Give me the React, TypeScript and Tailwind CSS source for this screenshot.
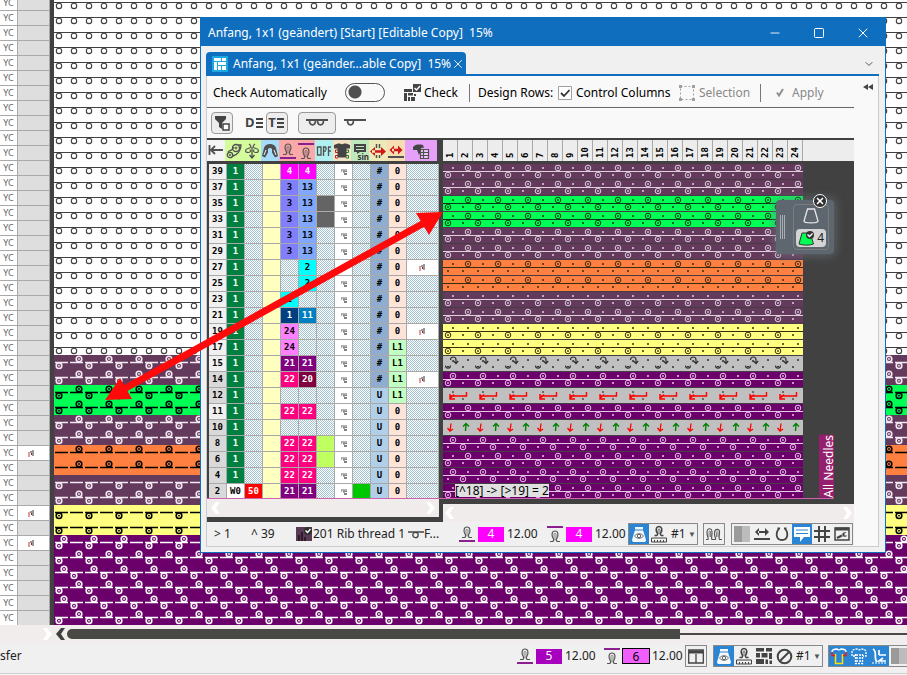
import type { ReactNode } from "react";
import { ChevronDown, Minus, Square, X } from "lucide-react";

const MAUVE = "#633a5b";
const GREEN = "#00ff55";
const ORANGE = "#ff8040";
const YELLOW = "#ffff80";
const PURPLE = "#6b006b";
const GRAY = "#c0c0c0";

interface Course { bg: string; fg: string; up?: number; down?: number; note?: boolean; }

const mauve = { bg: MAUVE, fg: "#f4e8f2" };
const purple = { bg: PURPLE, fg: "#ffffff" };

// Coloured courses of the fabric below the blank ones
const courses: Course[] = [
  { ...mauve, up: 25, down: 5 },
  { ...mauve, up: 25, down: 5 },
  { bg: GREEN, fg: "#000000", up: 25, down: 5 },
  { bg: GREEN, fg: "#000000", up: 25, down: 5 },
  { ...mauve, up: 25, down: 5 },
  { ...mauve, up: 25, down: 5 },
  { bg: ORANGE, fg: "#000000", up: 25, note: true },
  { bg: ORANGE, fg: "#000000", up: 25 },
  { ...mauve, down: 5 },
  { ...mauve, up: 25, down: 5 },
  { bg: YELLOW, fg: "#000000", down: 5, note: true },
  { bg: YELLOW, fg: "#000000", down: 5 },
  { ...purple, up: 10, down: 5, note: true },
  { ...purple, up: 25, down: 5 },
  { ...purple, up: 10, down: 20 },
  { ...purple, up: 25, down: 5 },
  { ...purple, up: 10, down: 20 },
  { ...purple, up: 25, down: 5 },
];
const fabric: (Course | null)[] = [...Array(24).fill(null), ...courses];

type RowKind = "knit" | "transfer" | "rack" | "split";

interface Row { no: number; front?: string; frontBg?: string; back?: string; backBg?: string; size?: string; note?: boolean; mode: string; rack: string; bg: string; fg: string; kind: RowKind; up?: number; down?: number; }

const lightLine = "#e0cfdd";
const darkLine = "#3a2a10";
const M = { bg: MAUVE, fg: lightLine, kind: "knit" as RowKind };
const P = { bg: PURPLE, fg: "#e8c4e8", kind: "knit" as RowKind };
const G = { bg: GREEN, fg: "#063a14", kind: "knit" as RowKind };
const O = { bg: ORANGE, fg: darkLine, kind: "knit" as RowKind };
const Y = { bg: YELLOW, fg: darkLine, kind: "knit" as RowKind };
const blues = { front: "3", frontBg: "bg-[#8080ff]", back: "13", backBg: "bg-[#80a8ff]" };
const pinks = { front: "22", frontBg: "bg-[#ff0080] text-white", back: "22", backBg: "bg-[#ff0080] text-white" };
const violets = { front: "21", frontBg: "bg-[#800080] text-white", back: "21", backBg: "bg-[#800080] text-white" };

const rows: Row[] = [
  { no: 39, ...M, front: "4", frontBg: "bg-[#ff00ff] text-white", back: "4", backBg: "bg-[#ff00ff] text-white", mode: "#", rack: "0", up: 25, down: 5 },
  { no: 37, ...M, ...blues, mode: "#", rack: "0", up: 25, down: 5 },
  { no: 35, ...G, ...blues, size: "bg-[#646464]", mode: "#", rack: "0", up: 25, down: 5 },
  { no: 33, ...G, ...blues, size: "bg-[#646464]", mode: "#", rack: "0", up: 25, down: 5 },
  { no: 31, ...M, ...blues, mode: "#", rack: "0", up: 25, down: 5 },
  { no: 29, ...M, ...blues, mode: "#", rack: "0", up: 25, down: 5 },
  { no: 27, ...O, back: "2", backBg: "bg-[#00ffff]", note: true, mode: "#", rack: "0", up: 25 },
  { no: 25, ...O, back: "2", backBg: "bg-[#00ffff]", mode: "#", rack: "0", up: 25 },
  { no: 23, ...M, front: "2", frontBg: "bg-[#00ffff]", mode: "#", rack: "0", down: 5 },
  { no: 21, ...M, front: "1", frontBg: "bg-[#004080] text-white", back: "11", backBg: "bg-[#0080c0] text-white", mode: "#", rack: "0", up: 25, down: 5 },
  { no: 19, ...Y, front: "24", frontBg: "bg-[#ff80ff]", note: true, mode: "#", rack: "0", down: 5 },
  { no: 17, ...Y, front: "24", frontBg: "bg-[#ff80ff]", mode: "#", rack: "L1", down: 5 },
  { no: 15, bg: GRAY, fg: "#303030", kind: "transfer", ...violets, mode: "#", rack: "L1" },
  { no: 14, ...P, front: "22", frontBg: "bg-[#ff0080] text-white", back: "20", backBg: "bg-[#800040] text-white", note: true, mode: "#", rack: "L1", up: 10, down: 5 },
  { no: 12, bg: GRAY, fg: "#505050", kind: "rack", mode: "U", rack: "L1" },
  { no: 11, ...P, ...pinks, mode: "U", rack: "0", up: 25, down: 5 },
  { no: 10, bg: GRAY, fg: "#505050", kind: "split", mode: "U", rack: "0" },
  { no: 8, ...P, ...pinks, size: "bg-[#c0ff60]", mode: "U", rack: "0", up: 10, down: 20 },
  { no: 6, ...P, ...pinks, size: "bg-[#c0ff60]", mode: "U", rack: "0", up: 25, down: 5 },
  { no: 4, ...P, ...pinks, mode: "U", rack: "0", up: 10, down: 20 },
  { no: 2, ...P, ...violets, mode: "U", rack: "0", up: 25, down: 5 },
];

const HATCH = "bg-[conic-gradient(#a3c3d3_25%,#ffffff_0_50%,#a3c3d3_0_75%,#ffffff_0)] bg-[length:2px_2px]";

function Loop({ x, y, fg, bg }: { x: number; y: number; fg: string; bg: string }) {
  return (
    <>
      <circle cx={x} cy={y} r="2.8" fill={bg} stroke={fg} strokeWidth="1.6" />
      <circle cx={x} cy={y} r="0.9" fill={fg} />
    </>
  );
}

function FabricRow({ course, id }: { course: Course | null; id: string }) {
  return (
    <svg className="block h-[15px] w-full shrink-0">
      <defs>
        <pattern id={id} width={course ? 30 : 15} height="15" patternUnits="userSpaceOnUse">
          {course ? (
            <>
              <rect width="30" height="15" fill={course.bg} />
              <path d="M1 7.5h13M16 7.5h13" stroke={course.fg} strokeWidth="1.4" />
              {course.up && <Loop x={course.up} y={4} fg={course.fg} bg={course.bg} />}
              {course.down && <Loop x={course.down} y={10.7} fg={course.fg} bg={course.bg} />}
            </>
          ) : (
            <>
              <rect width="15" height="15" fill="#ffffff" />
              <path d="M0 7.5h15" stroke="#404040" />
              <circle cx="5" cy="10.9" r="2.7" fill="none" stroke="#404040" strokeWidth="1.1" />
            </>
          )}
        </pattern>
      </defs>
      <rect width="100%" height="15" fill={`url(#${id})`} />
    </svg>
  );
}

function NeedleDot({ x, y, fg }: { x: number; y: number; fg: string }) {
  return <rect x={x - 1} y={y - 1} width="2" height="2" fill={fg} opacity="0.75" />;
}

function Ring({ x, y, fg }: { x: number; y: number; fg: string }) {
  return (
    <>
      <circle cx={x} cy={y} r="2.8" fill="none" stroke={fg} />
      <rect x={x - 0.8} y={y - 0.8} width="1.6" height="1.6" fill={fg} />
    </>
  );
}

function TechRow({ row }: { row: Row }) {
  const id = `tech-${row.no}`;
  return (
    <svg className="block h-4 w-full shrink-0">
      <defs>
        <pattern id={id} width="30" height="16" patternUnits="userSpaceOnUse">
          <rect width="30" height="16" fill="#463c46" />
          <rect y="1" width="30" height="15" fill={row.bg} />
          {row.kind === "knit" && (
            <>
              <path d="M0 8.5h30" stroke={row.fg} />
              {[10, 25].map((x) => (row.up === x ? <Ring key={x} x={x} y={5} fg={row.fg} /> : <NeedleDot key={x} x={x} y={5} fg={row.fg} />))}
              {[5, 20].map((x) => (row.down === x ? <Ring key={x} x={x} y={12} fg={row.fg} /> : <NeedleDot key={x} x={x} y={12} fg={row.fg} />))}
            </>
          )}
          {row.kind === "transfer" && (
            <>
              <path d="M7.5 5c0-4 5.500-4 5.500 0v3M10.500 6l2.500 2.700 2.200-2.700" fill="none" stroke={row.fg} strokeWidth="1.2" />
              <path d="M2.500 10.500c0 3.500 5 3.500 5 0M4 11.500h2" fill="none" stroke={row.fg} strokeWidth="1.1" />
              <NeedleDot x={10} y={6} fg={row.fg} />
              <NeedleDot x={25} y={5} fg={row.fg} />
              <NeedleDot x={20} y={12} fg={row.fg} />
            </>
          )}
          {row.kind === "rack" && (
            <>
              <path d="M23.500 5v4H7M11 7.500L7 11.500M7 7v5h5" fill="none" stroke="#ff0000" strokeWidth="1.400" />
              <NeedleDot x={10} y={5} fg={row.fg} />
              <NeedleDot x={20} y={12} fg={row.fg} />
            </>
          )}
          {row.kind === "split" && (
            <>
              <path d="M8 4.500L7 12M4.500 9l2.500 3.200L10 10" fill="none" stroke="#ff0000" strokeWidth="1.300" />
              <path d="M22.500 12l.500-7M20 7.500L23 4.500 26 7.500" fill="none" stroke="#008000" strokeWidth="1.400" />
            </>
          )}
        </pattern>
      </defs>
      <rect width="100%" height="16" fill={`url(#${id})`} />
    </svg>
  );
}

function NoteMark() {
  return (
    <svg width="7" height="7" viewBox="0 0 7 7" className="mx-auto block">
      <path d="M0 2h2v5H0z" fill="#e09a9a" />
      <path d="M2 1h2v2H2zM4 0h2v6H4z" fill="#999999" />
      <path d="M3 3h1v2H3z" fill="#803030" />
    </svg>
  );
}

function CellMark() {
  return (
    <svg width="6" height="6" viewBox="0 0 6 6" className="mx-auto block">
      <path d="M0 0h6v2H0zM2 2h2v2H2z" fill="#b0b0b0" />
      <path d="M2 2h4v1H2zM3 4h3v2H3z" fill="#808080" />
      <path d="M0 2h1v1H0z" fill="#d09090" />
    </svg>
  );
}

// Needle loop with the bed drawn under it (front) or over it (rear)
function BedLoop({ rear = false }: { rear?: boolean }) {
  return (
    <svg width="18" height="18" viewBox="0 0 18 18" className="shrink-0">
      <g transform={rear ? "translate(0 4)" : "translate(0 0)"} fill="none" stroke="#555555" strokeWidth="1.2">
        <path d="M4 12.500h2.500c1.500-.500 1.500-2 .500-3.500-1.500-2.500-1.500-7 2-7s3.500 4.500 2 7c-1 1.500-1 3 .500 3.500H14" />
        <path d="M8 11V5.500c0-1.500 2-1.500 2 0V11" strokeWidth="0.700" />
      </g>
      <path d={rear ? "M1 2h16" : "M1 16h16"} stroke="#8a2090" strokeWidth="2" />
    </svg>
  );
}

function LoopRuler() {
  return (
    <svg width="18" height="18" viewBox="0 0 18 18" fill="none" stroke="#444444" className="shrink-0">
      <path d="M4.500 10.500h2c1.500-.500 1.200-2 .500-3-1.500-2.500-1-6 2-6s3.500 3.500 2 6c-.700 1-1 2.500.500 3h2" strokeWidth="1.500" />
      <path d="M8 9V5c0-1.300 2-1.300 2 0v4" strokeWidth="0.800" />
      <path d="M1.500 13h15v4h-15zM4.500 15v2M7.500 15v2M10.500 15v2M13.500 15v2" />
    </svg>
  );
}

function ConeEye() {
  return (
    <svg width="18" height="18" viewBox="0 0 18 18" fill="none" className="shrink-0">
      <path d="M5 2h8v3l3 10c0 1.500-1 2-2 2H4c-1 0-2-.500-2-2L5 5z" fill="#f4f8fc" />
      <path d="M4 5h10" stroke="#2a86d4" />
      <path d="M4.500 11c2.500-3 6.500-3 9 0-2.500 3-6.500 3-9 0z" stroke="#555555" strokeWidth="0.900" />
      <circle cx="9" cy="11" r="1.700" stroke="#555555" strokeWidth="0.900" />
    </svg>
  );
}

function Modules({ checked = false }: { checked?: boolean }) {
  return (
    <svg width="18" height="18" viewBox="0 0 18 18" className="shrink-0" fill="#444444">
      <path d={checked ? "M1 5h8v3H1zM1 9h3v8H1zM5 9h5v2.500H5zM5 13h2v4H5zM8 13h4v4H8zM11 10h2v2h-2z" : "M1 1h8v3.500H1zM11 1h6v3.500h-6zM1 6h4v4.500H1zM6.500 6h6v4.500h-6zM14 6h3v6h-3zM1 12h8v5H1zM10.500 12.500h2.500v4.500h-2.500zM14.500 13.500H17V17h-2.500z"} />
      {checked && (
        <>
          <path d="M10 0h8v8h-8z" />
          <path d="M11.500 4l2 2 3.500-4" fill="none" stroke="#ffffff" strokeWidth="1.400" />
        </>
      )}
    </svg>
  );
}

function YarnLine({ loops = 2 }: { loops?: number }) {
  return (
    <svg width={loops === 2 ? 24 : 22} height="12" viewBox={loops === 2 ? "0 0 24 12" : "0 0 22 12"} fill="none" stroke="#505050" className="shrink-0">
      <path d={loops === 2 ? "M1 3h22" : "M0 3h22"} strokeWidth="2" />
      <path d={loops === 2 ? "M4.500 3c0 6.500 6 6.500 6 0M12.500 3c0 6.500 6 6.500 6 0" : "M3.500 3c0 6.500 6 6.500 6 0"} strokeWidth="1.700" />
    </svg>
  );
}

function HeadIcon({ children }: { children: ReactNode }) {
  return <svg width="18" height="20" viewBox="0 0 18 20" fill="none" stroke="#505050">{children}</svg>;
}

function ColumnHeads() {
  return (
    <div className="flex h-[21px] border-r-[6px] border-[#414141]">
      <span className="w-[18px] bg-[#f4f4f4]"><HeadIcon><path d="M2.500 5v10M4 10h12M8 6l-4 4 4 4" strokeWidth="1.800" /></HeadIcon></span>
      <span className="w-[18px] bg-[#d4fb9c]">
        <HeadIcon>
          <circle cx="11" cy="8" r="3.500" strokeWidth="1.300" />
          <circle cx="11" cy="8" r="1" />
          <circle cx="5" cy="15" r="2.700" strokeWidth="1.300" />
          <circle cx="5" cy="15" r=".7" />
          <path d="M3 12c2-2 4-1 6-5M8 16c4-1 8-5 8-11h-3" strokeWidth="1.300" />
        </HeadIcon>
      </span>
      <span className="w-[18px] bg-[#d4fb9c]">
        <HeadIcon>
          <path d="M9 7v11M6.500 15l2.500 3 2.500-3" strokeWidth="1.300" />
          <path d="M6 4c3 2 2 4-1 4.500-3 .500-3.500 4 0 4 2 0 3-1 2-3M12 4c-3 2-2 4 1 4.500 3 .500 3.500 4 0 4-2 0-3-1-2-3" strokeWidth="1.200" />
        </HeadIcon>
      </span>
      <span className="w-[18px] bg-[#a4dcfa]">
        <HeadIcon>
          <path d="M1 16l2-8c1-3 3-4 6-4s5 1 6 4l2 8-3 1.500-3-5V9c-1-1.500-3-1.500-4 0v3.500l-3 5z" fill="#505050" stroke="none" />
          <path d="M3 15l2-5M15 15l-2-5" stroke="#e8f6fd" />
        </HeadIcon>
      </span>
      <span className="flex w-[18px] items-center bg-[#fba8a8]"><BedLoop /></span>
      <span className="flex w-[18px] items-center bg-[#fba8a8]"><BedLoop rear /></span>
      <span className="w-[18px] bg-[#b0f0f0]">
        <HeadIcon><path d="M2.500 7h3.500v8H2.500zM8.500 16V7H11M8.500 11H11M13 7h3M13.500 16V7M13.500 11h2.500M11 7v3" strokeWidth="1.300" /></HeadIcon>
      </span>
      <span className="w-[18px] bg-[#f4e2c4]">
        <HeadIcon>
          <path d="M5 10H2.500v2.500H5M5 15.500H2.500V18H5" stroke="#c02020" />
          <path d="M13 10h2.500v2.500H13M13 15.500h2.500V18H13" stroke="#208020" />
          <path d="M5 3.500h2c1 1 3 1 4 0h2l4 1.500v3.500h-3.500v9h-9v-9H1V5z" fill="#444444" stroke="none" />
        </HeadIcon>
      </span>
      <span className="relative w-[18px] bg-[#bfe8bf]">
        <HeadIcon><path d="M3 4h12v8H9l-3 2v-2H3z" fill="#444444" stroke="none" /><path d="M5 6.500h8M5 9.500h8" stroke="#bfe8bf" /></HeadIcon>
        <b className="absolute bottom-0 right-0 text-[8px] leading-[8px] text-[#333333]">sin</b>
      </span>
      <span className="w-[18px] bg-[#ecebb8]">
        <HeadIcon><path d="M7.500 4v4M10.500 4v4M7.500 15v3M10.500 15v3" strokeWidth="1.500" /><path d="M6 7l-5 4.500L6 16zM12 7l5 4.500-5 4.500zM3 10.200h12v2.600H3z" fill="#d01818" stroke="none" /></HeadIcon>
      </span>
      <span className="w-[18px] bg-[#f6deb2]">
        <HeadIcon><path d="M7 5.500l-4.500 4.500L7 14.500zM11 5.500l4.500 4.500-4.500 4.500zM5 8.800h8v2.400H5z" fill="#d01818" stroke="none" /><path d="M1 17h16" strokeWidth="2" /></HeadIcon>
      </span>
      <span className="flex flex-1 justify-center bg-[#e6a0fa]">
        <HeadIcon>
          <path d="M1 7c3-3 6-2.500 10-2l1 3c-3-1-4 1-3 3l-2 4-2-5H1z" fill="#444444" stroke="none" />
          <path d="M8.500 9.500h8v9h-8zM8.500 12.500h8M8.500 15.500h8M11.500 9.500v9" fill="#f0c8ff" strokeWidth="1.200" />
        </HeadIcon>
      </span>
    </div>
  );
}

function ControlTable() {
  const cell = "h-4 border-b border-r border-[#a9a9a9] p-0 text-center";
  return (
    <table className="w-full table-fixed border-separate border-spacing-0 font-['DejaVu_Sans_Mono','Liberation_Mono',monospace] text-[9px] font-bold leading-[15px] text-black">
      <colgroup>
        {Array.from({ length: 11 }, (_, i) => <col key={i} className="w-[18px]" />)}
        <col />
      </colgroup>
      <tbody>
        {rows.map((r) => (
          <tr key={r.no}>
            <th scope="row" className={`${cell} ${r.no % 2 ? "bg-[#f0f0f0]" : "bg-[#d9d9d9]"}`}>{r.no}</th>
            <td className={`${cell} ${r.no === 2 ? "bg-white" : "bg-[#008040] text-white"}`}>{r.no === 2 ? "W0" : "1"}</td>
            <td className={`${cell} ${r.no === 2 ? "bg-[#ff0000] text-white" : HATCH}`}>{r.no === 2 ? "50" : ""}</td>
            <td className={`${cell} bg-[#ffffc0]`} />
            <td className={`${cell} ${r.frontBg ?? HATCH}`}>{r.front}</td>
            <td className={`${cell} ${r.backBg ?? HATCH}`}>{r.back}</td>
            <td className={`${cell} ${r.size ?? HATCH}`} />
            <td className={`${cell} bg-white`}>{r.no !== 27 && <CellMark />}</td>
            <td className={`${cell} ${r.no === 2 ? "bg-[#00c800]" : HATCH}`} />
            <td className={`${cell} ${r.mode === "#" ? "bg-[#90add0]" : "bg-[#b0cfe9]"}`}>{r.mode}</td>
            <td className={`${cell} ${r.rack === "L1" ? "bg-[#c0ffc0]" : "bg-[#fce4d8]"}`}>{r.rack}</td>
            <td className={`${cell} ${r.note ? "bg-white" : HATCH}`}>{r.note && <NoteMark />}</td>
          </tr>
        ))}
      </tbody>
    </table>
  );
}

function Arrowhead({ left = false, dark = false }: { left?: boolean; dark?: boolean }) {
  return (
    <svg width="9" height="12" viewBox="0 0 9 12" className="shrink-0" fill={dark ? "#404040" : "#ffffff"}>
      <path d={left ? "M5 0h4L5 6l4 6H5L0 6z" : "M0 0h4l5 6-5 6H0l4-6z"} />
    </svg>
  );
}

function YarnPalette() {
  return (
    <div className="absolute left-[333px] top-[60px] flex h-[54px] w-[58px] items-center rounded-sm bg-[#5e6770] pl-1 shadow-[0_0_10px_2px_rgba(110,120,130,0.6)]">
      <div className="h-6 w-[6px] bg-[repeating-linear-gradient(90deg,#a8adb2_0_1px,#5e6770_1px_2px)]" />
      <div className="ml-[7px] flex h-[46px] w-9 flex-col items-center rounded-sm border border-[#7c7c7c] pt-[3px]">
        <svg width="16" height="16" viewBox="0 0 16 16" fill="none" stroke="#e8e8e8" strokeWidth="1.300" className="shrink-0">
          <path d="M4.500 1h7M4.500 1L1 13c0 2.500 14 2.500 14 0L11.500 1z" />
        </svg>
        <button className="mt-[5px] flex h-[18px] w-[30px] shrink-0 items-center justify-between rounded-sm bg-[#d4d4d4] px-[2px] text-xs text-[#222222]">
          <svg width="17" height="16" viewBox="0 0 17 16">
            <path d="M4 3h8l3.500 11c-3 1.500-11 1.500-14.500 0z" fill="#00ff55" stroke="#333333" />
            <circle cx="12" cy="5" r="4" fill="#333333" />
            <path d="M9.500 4.500l2 2 3-3" fill="none" stroke="#ffffff" strokeWidth="1.300" />
          </svg>
          4
        </button>
      </div>
      <button aria-label="Close palette" className="absolute right-[7px] top-[-6px] flex h-[14px] w-[14px] items-center justify-center rounded-full border border-white bg-[#303030] text-white">
        <X size={10} strokeWidth={4} />
      </button>
    </div>
  );
}

function Editor() {
  return (
    <div className="flex border-t-2 border-[#414141]">
      <div className="flex w-[236px] shrink-0 flex-col bg-[#414141]">
        <ColumnHeads />
        <div className="mt-[3px] h-[334px] overflow-hidden border-l-2 border-r-4 border-[#414141]"><ControlTable /></div>
        <div className="border-t border-[#d060b0]" />
        <div className="mr-1 flex h-[18px] items-center justify-between bg-[#f0ecec] px-1"><Arrowhead left /><Arrowhead /></div>
        <div className="h-[5px]" />
      </div>
      <div className="relative flex min-w-0 flex-1 flex-col bg-[#414141]">
        <div className="flex h-[21px] bg-[#ededed]">
          {Array.from({ length: 24 }, (_, i) => (
            <span key={i} className="w-[15px] rotate-180 border-l border-[#a9a9a9] pt-[3px] font-['DejaVu_Sans_Mono','Liberation_Mono',monospace] text-[9px] font-bold leading-[14px] text-black [writing-mode:vertical-rl]">
              {i + 1}
            </span>
          ))}
        </div>
        <div className="mt-[2px] flex h-[335px]">
          <div className="w-[360px] overflow-hidden">{rows.map((r) => <TechRow key={r.no} row={r} />)}</div>
          <span className="ml-4 w-[15px] rotate-180 self-end bg-[#951f6e] py-[2px] text-xs leading-[15px] text-white [writing-mode:vertical-rl]">All Needles</span>
        </div>
        <div className="w-[391px] border-t border-[#d060b0]" />
        <div className="mt-[5px] flex flex-1 items-center justify-between bg-[#f0ecec] px-[2px]"><Arrowhead left /><Arrowhead /></div>
        <span className="absolute left-3 top-[344px] bg-[#e0e0e0] text-xs leading-[13px] text-black">[^18] -&gt; [&gt;19] = 2</span>
        <YarnPalette />
      </div>
    </div>
  );
}

function Swatch({ value, className }: { value: string; className: string }) {
  return <button className={`ml-[2px] mr-[3px] h-[15px] w-[26px] shrink-0 text-xs leading-[14px] ${className}`}>{value}</button>;
}

function WindowStatus() {
  return (
    <div className="flex h-6 items-center whitespace-nowrap bg-[#f0f0f0] text-xs text-[#222222]">
      <span className="w-11 shrink-0 pl-[7px]">&gt; 1</span>
      <span className="w-[45px] shrink-0">^ 39</span>
      <svg width="17" height="15" viewBox="0 0 17 15" className="shrink-0">
        <path d="M0 0h16v14H0z" fill="#5a3a55" />
        <path d="M3 14V8M6 14V5M9 14v-4" stroke="#2c1c2a" strokeWidth="2" />
        <circle cx="12" cy="4" r="4" fill="#303030" />
        <path d="M9.500 3.500l2 2 3-3.500" fill="none" stroke="#ffffff" strokeWidth="1.300" />
      </svg>
      <span className="w-[95px] shrink-0">201 Rib thread 1</span>
      <svg width="16" height="12" viewBox="0 0 16 12" fill="none" stroke="#444444" className="shrink-0">
        <path d="M0 4h16" strokeWidth="1.500" />
        <circle cx="7.500" cy="7" r="2.700" strokeWidth="1.300" />
      </svg>
      <span className="w-[34px] shrink-0">F...</span>
      <BedLoop />
      <Swatch value="4" className="bg-[#ff00ff] text-white" />
      <span className="w-[39px] shrink-0">12.00</span>
      <BedLoop rear />
      <Swatch value="4" className="bg-[#ff00ff] text-white" />
      <span className="w-[33px] shrink-0">12.00</span>
      <div className="flex h-[22px] w-[70px] shrink-0 items-center border border-[#888888]">
        <button className="flex h-full w-5 items-center justify-center bg-[#2a86d4]"><ConeEye /></button>
        <button className="flex w-5 justify-center"><LoopRuler /></button>
        <button className="flex flex-1 items-center justify-between pl-[2px] pr-px">#1 <span className="text-[8px] text-[#555555]">▼</span></button>
      </div>
      <button className="ml-[5px] flex h-[22px] w-[22px] shrink-0 items-center justify-center border border-[#888888]">
        <svg width="18" height="16" viewBox="0 0 18 16" fill="none" stroke="#555555" strokeWidth="1.200">
          <path d="M1 13.500h2c1-1-1-3-1-7 0-5 5-5 5 0 0 4-1 6 0 7h3.500c1-1-1.500-3-1-7 .500-4.500 5.500-4 5 0-.300 4-1 6 0 7H17" />
          <path d="M4 11V6c.300-1.500 1.200-1.500 1.500 0v5M11.500 11V6.500c.300-1.500 1.200-1.500 1.500 0V11" strokeWidth="0.700" />
        </svg>
      </button>
      <div className="ml-[6px] flex h-[22px] w-[122px] shrink-0 items-center border border-[#888888]">
        <button aria-label="Shading" className="flex h-full w-5 items-center justify-center"><span className="h-4 w-2 bg-[#9a9a9a]" /><span className="h-4 w-2 bg-[#bcbcbc]" /></button>
        <button aria-label="Racking" className="flex w-5 justify-center">
          <svg width="18" height="16" viewBox="0 0 18 16" fill="#444444"><path d="M6 2L2 6l4 4zM12 2l4 4-4 4zM5 5h8v2H5zM1 12h16v2H1z" /></svg>
        </button>
        <button aria-label="Carrier" className="flex w-5 justify-center">
          <svg width="16" height="16" viewBox="0 0 16 16" fill="none" stroke="#444444" strokeWidth="1.800"><path d="M5.500 2C1 7 2 14 8 14s7-7 2.500-12M3.500 2.500h2.500M10 2.500h2.500" /></svg>
        </button>
        <button aria-label="Comments" className="flex h-full w-5 items-center justify-center bg-[#2a86d4]">
          <svg width="16" height="17" viewBox="0 0 16 17"><path d="M0 1h16v10h-6l-4 5v-5H0z" fill="#ffffff" /><path d="M2 4h12M2 7.500h12" stroke="#2a86d4" /></svg>
        </button>
        <button aria-label="Grid" className="flex w-5 justify-center">
          <svg width="16" height="16" viewBox="0 0 16 16" stroke="#444444" strokeWidth="2"><path d="M5 0v16M11 0v16M0 5h16M0 11h16" /></svg>
        </button>
        <button aria-label="Settings" className="flex w-5 justify-center">
          <svg width="16" height="14" viewBox="0 0 16 14" fill="none" stroke="#444444"><path d="M1 1h14v12H1z" strokeWidth="1.500" /><path d="M1 2h14" strokeWidth="3" /><path d="M3 11l5-2.500" strokeWidth="2.500" /><path d="M12.500 5.500c-3-1-5 1-4 3s4 1.500 4.500 0h-2.500V6.500z" fill="#444444" stroke="none" /></svg>
        </button>
      </div>
    </div>
  );
}

function Toolbar() {
  return (
    <>
      <div className="flex h-8 items-center whitespace-nowrap border-b border-[#666666] pl-[6px] pt-[2px] text-xs text-black">
        <label htmlFor="auto-check" className="w-[132px]">Check Automatically</label>
        <input id="auto-check" type="checkbox" role="switch" className="h-[19px] w-10 shrink-0 appearance-none rounded-full border border-[#555555] bg-[radial-gradient(circle_at_9px_8px,#505050_6px,transparent_7px)]" />
        <button className="ml-[18px] flex w-[66px] items-center gap-[3px]"><Modules checked />Check</button>
        <span className="h-[18px] border-l border-[#777777]" />
        <span className="ml-2 w-20">Design Rows:</span>
        <label className="flex w-[121px] items-center gap-[4px]">
          <input type="checkbox" defaultChecked className="peer sr-only" />
          <svg width="14" height="14" viewBox="0 0 14 14" className="shrink-0"><path d="M.5.5h13v13H.5z" fill="#ffffff" stroke="#a0a0a0" /><path d="M3 7l3 3 5.500-6" fill="none" stroke="#333333" strokeWidth="1.800" /></svg>
          Control Columns
        </label>
        <button disabled className="flex w-[81px] items-center gap-1 text-[#888888]">
          <svg width="16" height="16" viewBox="0 0 16 16" fill="none" stroke="#a0a0a0"><path d="M1.500 1.500h13v13h-13z" strokeDasharray="2 2" /><path d="M0 0h3v3H0zM13 0h3v3h-3zM0 13h3v3H0zM13 13h3v3h-3z" fill="#a0a0a0" stroke="none" /></svg>
          Selection
        </button>
        <span className="h-[18px] border-l border-[#777777]" />
        <button disabled className="ml-[15px] flex items-center gap-2 text-[#888888]">
          <svg width="8" height="9" viewBox="0 0 8 9" fill="none" stroke="#909090" strokeWidth="2"><path d="M1 4.500l2 3L7 1" /></svg>
          Apply
        </button>
      </div>
      <div className="flex h-[30px] items-center pl-1">
        <button aria-label="Filter" className="flex h-[22px] w-[22px] items-center justify-center rounded-sm border border-[#999999] bg-[#ededed]">
          <svg width="18" height="18" viewBox="0 0 18 18"><path d="M2 2h11v3L9 9v6l-3-2V9L2 5z" fill="#444444" /><path d="M10 10h6v6h-6z" fill="#ffffff" stroke="#444444" strokeWidth="1.500" /></svg>
        </button>
        <button className="ml-3 flex h-[22px] items-center text-[13px] font-bold text-[#444444]">
          D<svg width="9" height="12" viewBox="0 0 9 12" stroke="#444444" strokeWidth="2"><path d="M1 2h7M1 6h7M1 10h7" /></svg>
        </button>
        <button className="ml-[2px] flex h-[22px] w-[22px] items-center justify-center rounded-sm border border-[#999999] bg-[#ededed] text-[13px] font-bold text-[#444444]">
          T<svg width="9" height="12" viewBox="0 0 9 12" stroke="#444444" strokeWidth="2"><path d="M1 2h7M1 6h7M1 10h7" /></svg>
        </button>
        <button aria-label="Two loops" className="ml-[10px] flex h-[22px] w-[38px] items-center justify-center rounded-sm border border-[#999999] bg-[#ededed]"><YarnLine /></button>
        <button aria-label="One loop" className="ml-2"><YarnLine loops={1} /></button>
      </div>
    </>
  );
}

function ModuleWindow() {
  return (
    <section className="absolute left-[200px] right-[21px] top-[17px] border border-[#106ebe] bg-[#f0f0f0]">
      <header className="flex h-7 items-center bg-[#106ebe] pl-[7px] pt-[2px] text-xs text-white">
        <h1 className="flex-1 whitespace-pre">{"Anfang, 1x1 (geändert) [Start] [Editable Copy]  15%"}</h1>
        <button aria-label="Minimize" className="flex w-11 justify-center"><Minus size={14} strokeWidth={1.5} /></button>
        <button aria-label="Maximize" className="flex w-11 justify-center"><Square size={12} strokeWidth={2} /></button>
        <button aria-label="Close" className="flex w-11 justify-center"><X size={16} strokeWidth={1.5} /></button>
      </header>
      <div className="pb-[5px] pl-[5px] pr-[6px]">
        <div className="flex h-[30px] items-end justify-between border-b-2 border-[#106ebe]">
          <div className="flex h-[22px] w-[260px] items-center rounded-t-sm bg-[#106ebe] pl-[6px] pt-[2px] text-xs text-white">
            <svg width="16" height="16" viewBox="0 0 16 16" className="mr-[5px] shrink-0">
              <path d="M0 0h16v16H0z" fill="#1ba8e0" />
              <path d="M2 2h7v3H2zM10 2h4v3h-4zM2 6h3v8H2zM6 6h8v3H6zM6 10h3v4H6zM10 10h4v4h-4z" fill="#ffffff" />
            </svg>
            <span className="flex-1 whitespace-pre">{"Anfang, 1x1 (geänder...able Copy]  15%"}</span>
            <button aria-label="Close tab" className="mr-1"><X size={14} strokeWidth={1.5} /></button>
          </div>
          <button aria-label="More tabs" className="mb-1 mr-1 text-[#555555]"><ChevronDown size={12} /></button>
        </div>
        <div className="flex border-b border-l border-r border-[#cccccc] bg-[#f9f9f9]">
          <div className="min-w-0 flex-1">
            <Toolbar />
            <Editor />
            <WindowStatus />
          </div>
          <div className="w-6 pl-[9px] pt-2">
            <button aria-label="Collapse" className="block"><svg width="10" height="6" viewBox="0 0 10 6" fill="#444444"><path d="M5 0v6L0 3zM10 0v6L5 3z" /></svg></button>
          </div>
        </div>
      </div>
    </section>
  );
}

function MainStatus() {
  return (
    <footer className="flex h-[30px] shrink-0 items-center justify-between overflow-hidden whitespace-nowrap bg-[#f0f0f0] pb-1 text-xs text-[#222222]">
      <span>sfer</span>
      <div className="flex shrink-0 items-center">
        <BedLoop />
        <Swatch value="5" className="bg-[#a800bf] text-white" />
        <span className="w-[38px]">12.00</span>
        <BedLoop rear />
        <button className="ml-[1px] mr-[2px] h-4 w-7 border border-black bg-[#f25fff] text-xs leading-[13px] text-black">6</button>
        <span className="w-[33px]">12.00</span>
        <button aria-label="Table view" className="flex h-[22px] w-[22px] items-center justify-center border border-[#888888]">
          <svg width="16" height="15" viewBox="0 0 16 15" fill="none" stroke="#444444"><path d="M.7 1h14.600v13H.7zM8 5v9" strokeWidth="1.300" /><path d="M1 3h14" strokeWidth="3" /></svg>
        </button>
        <div className="ml-[6px] flex h-[22px] w-[110px] items-center border border-[#888888]">
          <button className="flex h-full w-5 items-center justify-center bg-[#2a86d4]"><ConeEye /></button>
          <button className="flex w-5 justify-center"><LoopRuler /></button>
          <button className="flex w-5 justify-center"><Modules /></button>
          <button className="flex w-5 justify-center">
            <svg width="17" height="17" viewBox="0 0 17 17" fill="none" stroke="#444444" strokeWidth="2"><circle cx="8.500" cy="8.500" r="6.800" /><path d="M13 4L4 13" /></svg>
          </button>
          <button className="flex flex-1 items-center justify-between pl-[2px] pr-px">#1 <span className="text-[8px] text-[#555555]">▼</span></button>
        </div>
        <div className="ml-[5px] flex h-[22px] items-center border border-r-0 border-[#888888]">
          <div className="flex h-full items-center bg-[#2a86d4]">
            <button className="flex w-5 justify-center">
              <svg width="16" height="18" viewBox="0 0 16 18" fill="none"><path d="M4.500 7v9.500h7V7" stroke="#ffe000" strokeWidth="1.500" /><path d="M1 5v3.500h3M15 5v3.500h-3" stroke="#e02020" strokeWidth="1.500" /><path d="M1 5c0-2 2-3 5-3 1 1 3 1 4 0 3 0 5 1 5 3" stroke="#ffffff" strokeWidth="1.500" /></svg>
            </button>
            <button className="flex w-5 justify-center">
              <svg width="16" height="18" viewBox="0 0 16 18" fill="none" stroke="#ffffff" strokeWidth="1.300" strokeDasharray="2 1"><path d="M4.500 7v9.500h7V7M4 9H1V5c0-2 2-3 5-3 1 1 3 1 4 0 3 0 5 1 5 3v4h-3M5 8h6M5 11h6M5 14h6" /></svg>
            </button>
            <button className="flex w-5 justify-center">
              <svg width="16" height="18" viewBox="0 0 16 18" fill="none" stroke="#ffffff" strokeWidth="1.700"><path d="M2 2c5 3 0 9 4 13M8 8h7M8 3v5M12 11l-4 3h7" /><path d="M1 16h15" strokeWidth="1" strokeDasharray="2 1" /></svg>
            </button>
          </div>
          <span className="ml-[2px] h-4 w-2 bg-[#9a9a9a]" />
          <span className="h-4 w-2 bg-[#bcbcbc]" />
        </div>
      </div>
    </footer>
  );
}

export default function App() {
  return (
    <main className="relative flex h-screen flex-col overflow-hidden bg-[#f6f6f6] font-['Noto_Sans','Open_Sans',sans-serif]">
      <div className="flex min-h-0 flex-1 items-end overflow-hidden bg-white">
        <div className="w-[50px] shrink-0">
          {fabric.map((c, i) => (
            <div key={i} className="flex h-[15px] border-t border-[#a9a9a9] text-[9px] leading-[14px] text-[#666666]">
              <span className="w-[18px] border-r border-[#a9a9a9] bg-white text-center">YC</span>
              <span className={`flex flex-1 items-center border-r border-[#a9a9a9] ${c?.note ? "bg-white pr-1" : "bg-[#dedede]"}`}>{c?.note && <NoteMark />}</span>
            </div>
          ))}
        </div>
        <div className="w-1 shrink-0 self-stretch bg-[#414141]" />
        <div className="min-w-0 flex-1">
          {fabric.map((c, i) => <FabricRow key={i} course={c} id={`fabric-${i}`} />)}
        </div>
      </div>
      <div className="flex h-[18px] shrink-0 items-center bg-[#f1eded] pl-[43px]">
        <Arrowhead />
        <span className="w-1" />
        <Arrowhead left dark />
        <div className="ml-[2px] h-[10px] w-[71%] rounded-l-full rounded-r-sm bg-[#484844]" />
        <div className="h-[2px] flex-1 bg-[#484848]" />
      </div>
      <MainStatus />
      <div className="h-[2px] shrink-0 border-t border-[#d0d0d0]" />

      <ModuleWindow />

      {/* Pointer linking the same course in both views */}
      <svg width="340" height="190" viewBox="0 0 340 190" className="pointer-events-none absolute left-[104px] top-[211px]" fill="#ff0a0a">
        <path d="M1 189L16 167 28 188zM339 1L312 2 325 24z" />
        <path d="M20 178L320 12" stroke="#ff0a0a" strokeWidth="7" />
      </svg>
    </main>
  );
}
